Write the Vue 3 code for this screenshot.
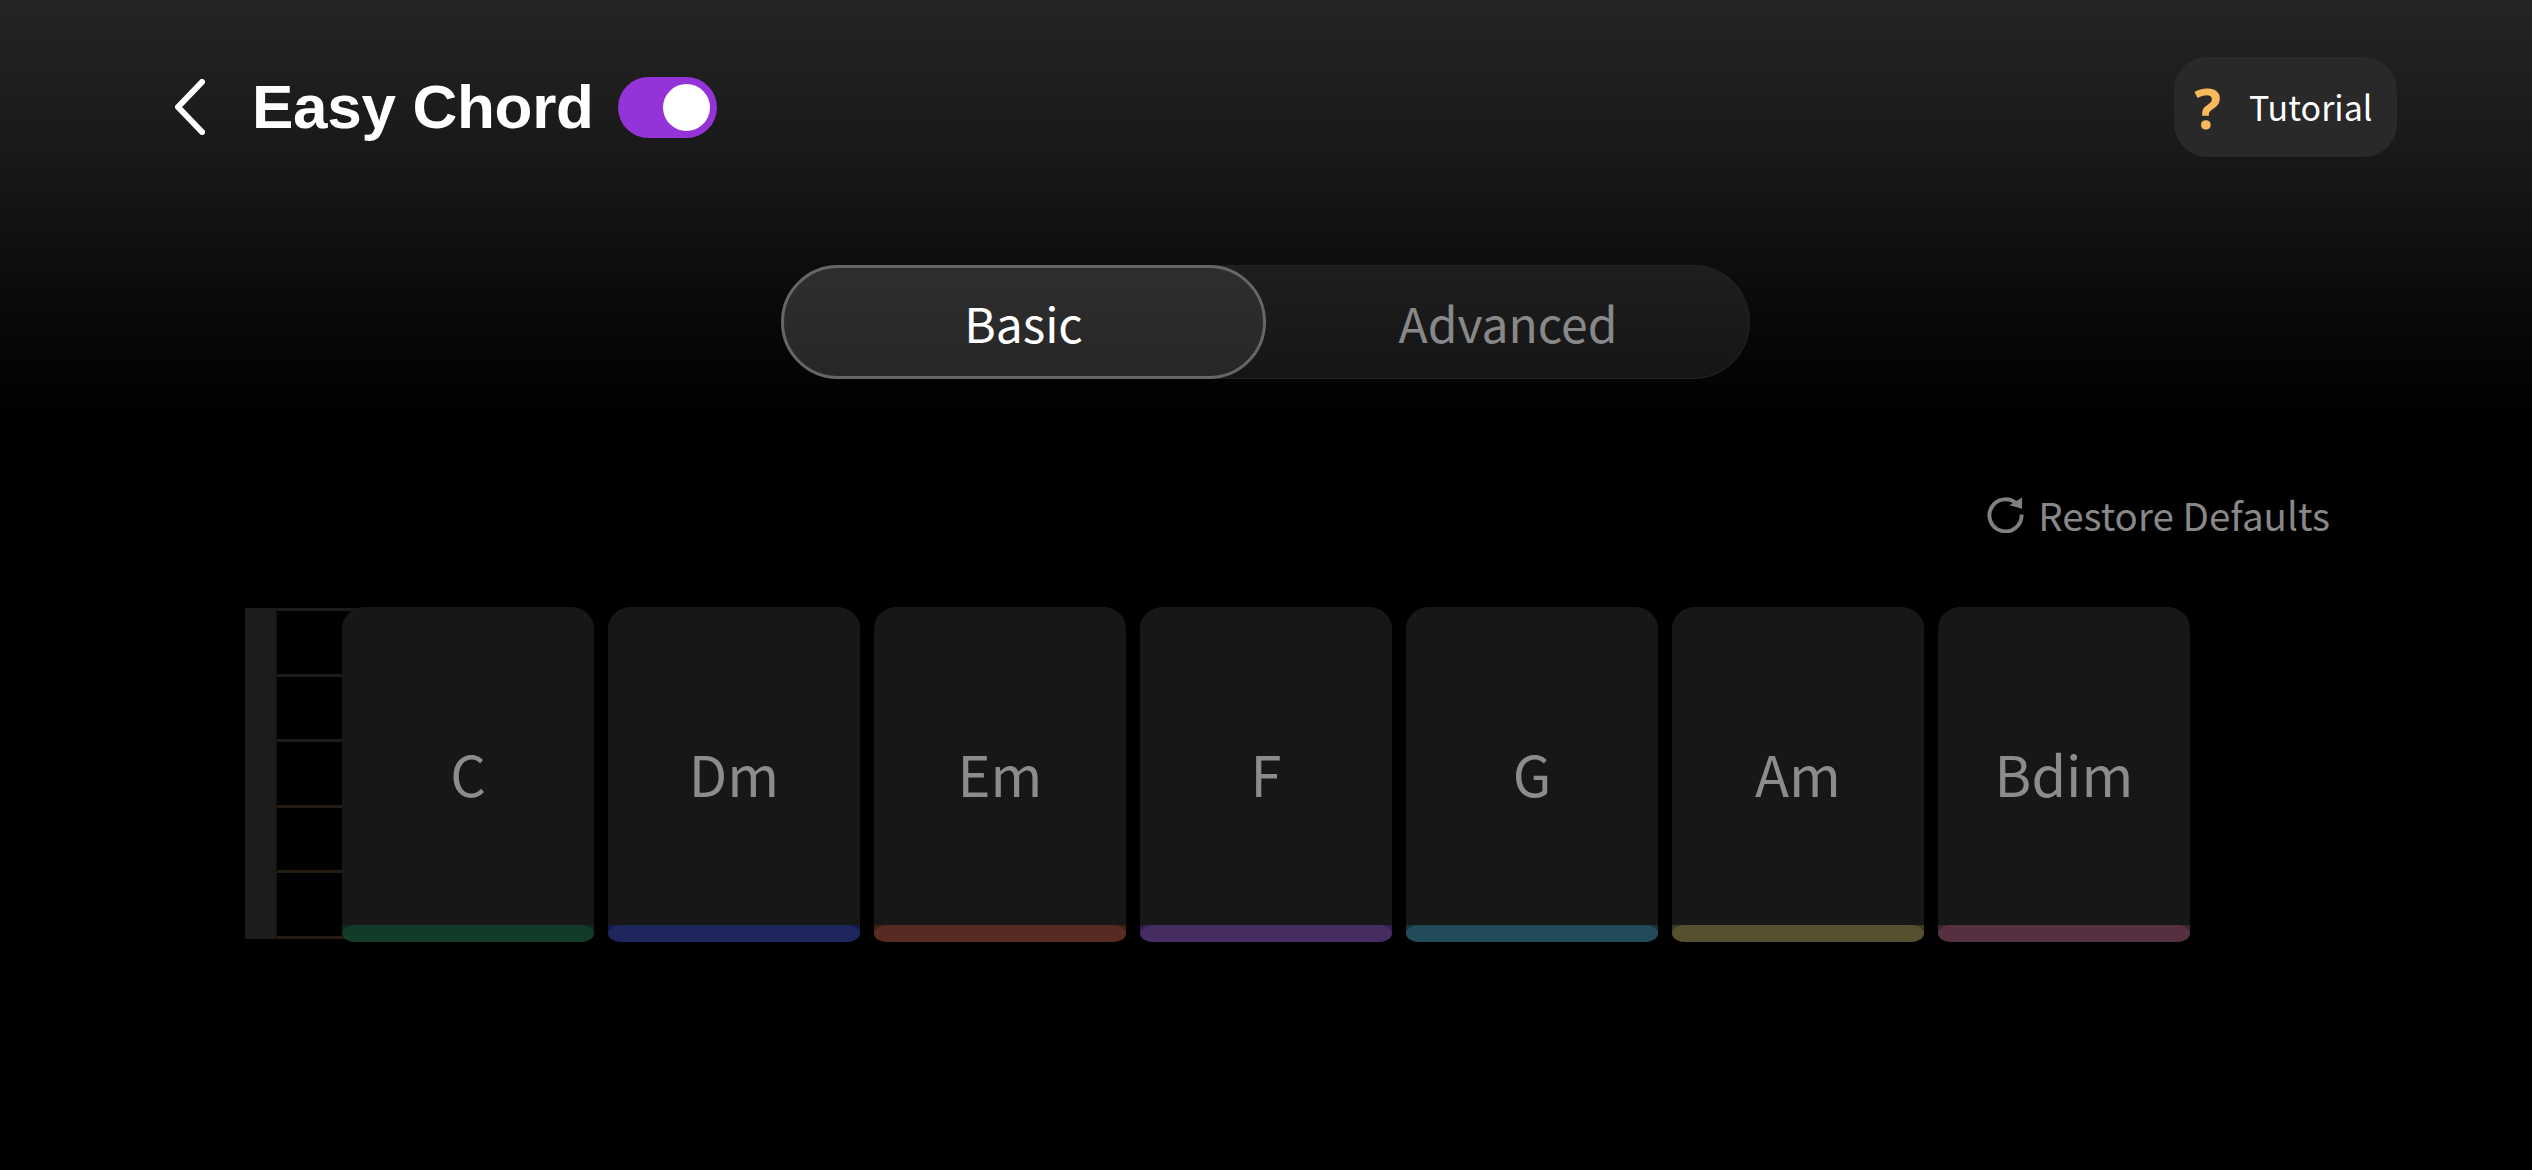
<script setup>
import { ref } from 'vue'

const enabled = ref(true)
const mode = ref('Basic')
const modes = ['Basic', 'Advanced']

const chords = [
  { name: 'C', color: '#14402c', edge: '#0c2c1e' },
  { name: 'Dm', color: '#1f2a63', edge: '#141c46' },
  { name: 'Em', color: '#5f2c26', edge: '#43201b' },
  { name: 'F', color: '#4a2f68', edge: '#33204a' },
  { name: 'G', color: '#24505f', edge: '#173845' },
  { name: 'Am', color: '#5d5632', edge: '#423c20' },
  { name: 'Bdim', color: '#5c3346', edge: '#412231' }
]

const frets = [0, 1, 2, 3, 4, 5]
</script>

<template>
  <main class="page">
    <header class="top">
      <div class="title-wrap">
        <svg class="back" viewBox="0 0 30 56" fill="none">
          <path d="M27 3 L3 28 L27 53" stroke="#fff" stroke-width="6" stroke-linecap="round" stroke-linejoin="round" />
        </svg>
        <h1>Easy Chord</h1>
        <button class="switch" :class="{ on: enabled }" @click="enabled = !enabled">
          <span class="knob"></span>
        </button>
      </div>
      <button class="tutorial">
        <span class="mark">?</span>
        <span>Tutorial</span>
      </button>
    </header>

    <div class="tabs">
      <button
        v-for="m in modes"
        :key="m"
        class="tab"
        :class="{ active: mode == m }"
        @click="mode = m"
      >{{ m }}</button>
    </div>

    <div class="restore-row">
      <button class="restore">
        <svg class="restore-icon" viewBox="0 0 38 38" fill="none">
          <path d="M31 8.5 A16.5 16.5 0 1 0 35.5 19" stroke="#808080" stroke-width="4" />
          <path d="M23 9.5 L36 1.5 L36 13 Z" fill="#808080" />
        </svg>
        Restore Defaults
      </button>
    </div>

    <section class="board">
      <div class="neck">
        <div class="nut"></div>
        <div class="frets">
          <i v-for="f in frets" :key="f" :class="{ warm: f > 2 }"></i>
        </div>
      </div>
      <div class="keys">
        <div v-for="c in chords" :key="c.name" class="key">
          <div class="key-face">{{ c.name }}</div>
          <div class="key-bar" :style="{ background: c.edge }">
            <span :style="{ background: c.color }"></span>
          </div>
        </div>
      </div>
    </section>
  </main>
</template>

<style>
html, body {
  margin: 0;
  background: #000;
}
</style>

<style scoped>
* {
  box-sizing: border-box;
}
.page {
  width: 2532px;
  height: 1170px;
  overflow: hidden;
  background: linear-gradient(180deg, #242424 0, #191919 150px, #0a0a0a 300px, #000 420px);
  font-family: "Noto Sans CJK SC", "Noto Sans", sans-serif;
  font-weight: 400;
  display: flex;
  flex-direction: column;
}
button {
  appearance: none;
  border: none;
  background: none;
  padding: 0;
  font: inherit;
  color: inherit;
  cursor: pointer;
}

.top {
  display: flex;
  justify-content: space-between;
  align-items: center;
  padding: 57px 135px 0 175px;
}
.title-wrap {
  display: flex;
  align-items: center;
}
.back {
  width: 30px;
  height: 56px;
  margin-right: 47px;
}
h1 {
  margin: 0;
  font-family: "Liberation Sans", Arial, sans-serif;
  font-size: 62px;
  font-weight: 700;
  line-height: 70px;
  letter-spacing: -0.3px;
  color: #fff;
}
.switch {
  width: 99px;
  height: 61px;
  margin-left: 24px;
  border-radius: 31px;
  background: #9333d8;
  display: flex;
  align-items: center;
  justify-content: flex-end;
  padding-right: 7px;
}
.knob {
  width: 47px;
  height: 47px;
  border-radius: 50%;
  background: #fff;
}
.tutorial {
  width: 223px;
  height: 100px;
  border-radius: 33px;
  background: #292929;
  display: flex;
  align-items: center;
  padding-left: 17px;
  color: #fff;
  font-size: 34px;
  line-height: 48px;
}
.mark {
  width: 33px;
  margin-right: 25px;
  color: #f8b95c;
  font-family: "Noto Sans", sans-serif;
  font-weight: 700;
  font-size: 56px;
  line-height: 1;
}

.tabs {
  align-self: flex-start;
  margin: 108px 0 0 781px;
  width: 969px;
  height: 114px;
  border-radius: 57px;
  background: linear-gradient(180deg, #1e1e1e, #151515);
  box-shadow: inset 0 0 0 1px #222;
  display: flex;
}
.tab {
  flex: 1;
  height: 114px;
  border-radius: 57px;
  font-size: 48px;
  color: #888;
}
.tab.active {
  flex: 0 0 485px;
  color: #fff;
  background: linear-gradient(180deg, #2e2e2e, #272727);
  border: 3px solid #666;
}

.restore-row {
  display: flex;
  justify-content: flex-end;
  padding: 106px 202px 0 0;
}
.restore {
  display: flex;
  align-items: center;
  gap: 14px;
  font-size: 38.5px;
  line-height: 58px;
  color: #888;
}
.restore-icon {
  width: 37px;
  height: 37px;
}

.board {
  display: flex;
  align-items: flex-start;
  margin: 64px 0 0 245px;
}
.neck {
  display: flex;
  height: 331px;
  margin-top: 1px;
  margin-right: -16px;
}
.nut {
  width: 30px;
  height: 331px;
  background: #1c1c1c;
}
.frets {
  width: 83px;
  border-left: 2px solid #161616;
  display: flex;
  flex-direction: column;
  justify-content: space-between;
}
.frets i {
  display: block;
  height: 3px;
  background: #1b1b1b;
}
.frets i.warm {
  background: #241c10;
}
.keys {
  display: flex;
  gap: 14px;
  position: relative;
}
.key {
  width: 252px;
  height: 335px;
  display: flex;
  flex-direction: column;
}
.key-face {
  flex: 1;
  background: #171717;
  border-radius: 22px 22px 0 0;
  color: #8c8c8c;
  font-size: 56px;
  padding-top: 13px;
  display: flex;
  align-items: center;
  justify-content: center;
}
.key-bar {
  height: 17px;
  border-radius: 0 0 12px 12px;
  opacity: 0.94;
}
.key-bar span {
  display: block;
  height: 17px;
  border-radius: 14px / 9px;
}
</style>
